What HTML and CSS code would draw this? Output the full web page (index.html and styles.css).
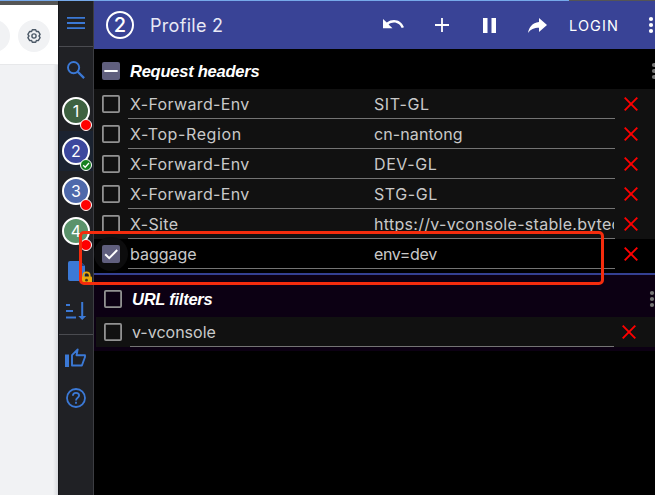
FILE: index.html
```html
<!DOCTYPE html>
<html lang="en">
<head>
<meta charset="utf-8">
<title>Profile 2</title>
<link rel="stylesheet" href="styles.css">
</head>
<body>
<svg class="defs" aria-hidden="true">
  <symbol id="box" viewBox="0 0 18 18"><rect x=".9" y=".9" width="16.2" height="16.2" rx="1" fill="none" stroke="currentColor" stroke-width="1.8"/></symbol>
  <symbol id="close" viewBox="0 0 14 14"><path d="M.7.7l12.6 12.6M13.3.7L.7 13.3" fill="none" stroke="currentColor" stroke-width="1.9"/></symbol>
  <symbol id="dots" viewBox="0 0 6 18"><circle cx="3" cy="3" r="2.1"/><circle cx="3" cy="9" r="2.1"/><circle cx="3" cy="15" r="2.1"/></symbol>
</svg>
<div class="progress"><div class="progress-fill"></div></div>
<div class="shell">
  <div class="page">
    <div class="page-top">
      <span class="round"></span>
      <span class="round">
        <svg width="14" height="14" viewBox="0 0 14 14" fill="none" stroke="#4c5967" stroke-width="1.4" stroke-linejoin="round"><path d="M5.3.8h3.4l.7 1.7 1.9-.1 1.8 2.9L12 7l1.1 1.7-1.8 2.9-1.9-.1-.7 1.7H5.3l-.7-1.7-1.9.1L.9 8.7 2 7 .9 5.3l1.8-2.9 1.9.1z"/><circle cx="7" cy="7" r="2.1"/></svg>
      </span>
    </div>
  </div>
  <nav class="side">
    <div class="cell menu"><svg width="18" height="12" viewBox="0 0 18 12" fill="#3b79d6"><path d="M0 0h18v1.8H0zM0 5.1h18v1.8H0zM0 10.2h18V12H0z"/></svg></div>
    <div class="cell search"><svg width="18" height="18" viewBox="0 0 18 18" fill="none" stroke="#3b79d6" stroke-width="1.9"><circle cx="6.6" cy="6.6" r="5.6"/><path d="M10.7 10.7l6.4 6.4" stroke-width="2.3"/></svg></div>
    <div class="cell"><span class="num green">1<i class="dot"></i></span></div>
    <div class="cell current"><span class="num indigo">2<i class="dot ok"><svg width="8" height="8" viewBox="0 0 8 8" fill="none" stroke="#fff" stroke-width="1.3"><path d="M1.2 4.2l2 2L7 2"/></svg></i></span></div>
    <div class="cell"><span class="num blue">3<i class="dot"></i></span></div>
    <div class="cell"><span class="num mint">4<i class="dot"></i></span></div>
    <div class="cell"><svg class="doc" width="25" height="25" viewBox="0 0 25 25"><path d="M2 1h10l5 5v15H2q-2 0-2-2V3q0-2 2-2z" fill="#3b79d6"/><path d="M12 1v5h5" fill="#24427c"/><path d="M15.3 17v-1.4a3.2 3.2 0 0 1 6.4 0V17" fill="none" stroke="#eaa80b" stroke-width="1.7"/><rect x="13" y="16.5" width="11" height="7.5" rx="1" fill="#eaa80b"/><circle cx="18.5" cy="20.2" r="1.4" fill="#423719"/></svg></div>
    <div class="cell sort"><svg width="21" height="19" viewBox="0 0 21 19" fill="#3b79d6"><path d="M0 2h4v2H0zM0 8h7v2H0zM0 14.500h10v2H0zM15.200 0h2v14h3L16.200 18l-3.900-4h2.900z"/></svg></div>
    <div class="cell like"><svg width="24" height="24" viewBox="0 0 24 24" fill="#3b79d6"><path d="M1 9.5h4V22H1z"/><path d="M8 10.1L13.7 4.4 12.5 10.2H21V12l-3.1 8.5H8z" fill="none" stroke="#3b79d6" stroke-width="1.9" stroke-linejoin="round"/></svg></div>
    <div class="cell help"><svg width="20" height="20" viewBox="0 0 20 20" fill="none" stroke="#3b79d6" stroke-width="1.8"><circle cx="10" cy="10" r="9"/><path d="M6.9 7.8c0-1.8 1.3-3 3.1-3s3.1 1.2 3.1 2.8c0 2.1-3.1 2.3-3.1 4.800M10 13.800v2"/></svg></div>
  </nav>
  <main class="main">
    <header class="bar">
      <span class="badge">2</span>
      <h1>Profile 2</h1>
      <div class="tools">
        <svg width="22" height="12" viewBox="0 0 22 12" fill="#fff"><path d="M0 0l3.8 3.5C6 1.8 8.5 1 11 1c4.500 0 8.300 2.800 10 7.300l-2.300.8C17.400 5.700 14.500 3.500 11 3.500c-2 0-3.900.7-5.400 1.900L9.500 9.300H0z"/></svg>
        <svg width="14" height="14" viewBox="0 0 14 14" fill="#fff"><path d="M6.100 0h1.800v6.100H14v1.800H7.900V14H6.100V7.900H0V6.100h6.100z"/></svg>
        <svg width="13" height="15" viewBox="0 0 13 15" fill="#fff"><path d="M0 0h4.500v15H0zM8.500 0H13v15H8.500z"/></svg>
        <svg width="19" height="15" viewBox="0 0 19 15" fill="#fff"><path d="M11 0l8 7-8 7v-4.200C6 9.800 2.700 11.300 0 15 1 9.500 4.200 4.600 11 4z"/></svg>
      </div>
      <span class="login">LOGIN</span>
      <svg class="more" width="6" height="18" fill="#fff"><use href="#dots"/></svg>
    </header>
    <section class="headers">
      <div class="title">
        <svg class="check" width="18" height="18" viewBox="0 0 18 18"><rect width="18" height="18" rx="2" fill="#605f7e"/><path d="M2.300 9h13.400" stroke="#fff" stroke-width="2"/></svg>
        <h2>Request headers</h2>
        <svg class="dots" width="6" height="18"><use href="#dots"/></svg>
      </div>
      <div class="row"><svg class="check"><use href="#box"/></svg><div class="fields"><span class="name wide">X-Forward-Env</span><span class="value upper">SIT-GL</span></div><svg class="x"><use href="#close"/></svg></div>
      <div class="row"><svg class="check"><use href="#box"/></svg><div class="fields"><span class="name wider">X-Top-Region</span><span class="value">cn-nantong</span></div><svg class="x"><use href="#close"/></svg></div>
      <div class="row"><svg class="check"><use href="#box"/></svg><div class="fields"><span class="name wide">X-Forward-Env</span><span class="value upper">DEV-GL</span></div><svg class="x"><use href="#close"/></svg></div>
      <div class="row"><svg class="check"><use href="#box"/></svg><div class="fields"><span class="name wide">X-Forward-Env</span><span class="value upper">STG-GL</span></div><svg class="x"><use href="#close"/></svg></div>
      <div class="row"><svg class="check"><use href="#box"/></svg><div class="fields"><span class="name wide">X-Site</span><span class="value url">https://v-vconsole-stable.byted</span></div><svg class="x"><use href="#close"/></svg></div>
      <div class="row active"><svg class="check" viewBox="0 0 18 18"><circle cx="9" cy="9" r="17" fill="#0c0c0d"/><rect width="18" height="18" rx="2" fill="#605f7e"/><path d="M3.200 9.200l4 4L15.200 5" fill="none" stroke="#fff" stroke-width="2"/></svg><div class="fields"><span class="name">baggage</span><span class="value tight">env=dev</span></div><svg class="x"><use href="#close"/></svg></div>
    </section>
    <section class="filters">
      <div class="title">
        <svg class="check"><use href="#box"/></svg>
        <h2>URL filters</h2>
        <svg class="dots" width="6" height="18"><use href="#dots"/></svg>
      </div>
      <div class="row"><svg class="check"><use href="#box"/></svg><div class="fields"><span class="name">v-vconsole</span></div><svg class="x"><use href="#close"/></svg></div>
    </section>
  </main>
</div>
<div class="marker"></div>
</body>
</html>
```
FILE: styles.css
```css
* { box-sizing: border-box; }
body {
  margin: 0;
  width: 655px;
  height: 495px;
  overflow: hidden;
  background: #000;
  color: #c9c9c9;
  font: 16px Inter, "Liberation Sans", sans-serif;
}
svg { display: block; flex: none; }
h1, h2 { margin: 0; }
.defs { display: none; }
.progress { height: 1px; background: #555; }
.progress-fill { width: 569px; height: 1px; background: #76a9ea; }
.shell { display: flex; height: 494px; }

.page { width: 58px; flex: none; background: linear-gradient(90deg, transparent 53px, #d9dbdf) #f1f2f4; border-top: 4px solid #555; }
.page-top { display: flex; align-items: center; gap: 8px; height: 60px; background: #fff; border-bottom: 1px solid #e7e8ea; overflow: hidden; }
.round { display: flex; align-items: center; justify-content: center; flex: none; width: 32px; height: 32px; margin-top: 2px; border-radius: 50%; background: #f1f2f4; }
.round:first-child { margin-left: -22px; }

.side { width: 36px; flex: none; background: #202125; border-left: 1px solid #15161a; border-right: 1px solid #3c3d42; }
.cell { display: flex; align-items: center; justify-content: center; height: 40px; }
.menu { height: 46px; padding-bottom: 2px; border-bottom: 1px solid #4a4b50; }
.search { height: 44px; padding-top: 2px; }
.current { background: #1b2331; }
.num {
  position: relative;
  display: flex;
  align-items: center;
  justify-content: center;
  flex: none;
  width: 28px;
  height: 28px;
  border: 2px solid #fff;
  border-radius: 50%;
  color: #fff;
  font-size: 16px;
}
.green { background: #3e6241; }
.indigo { background: #3c489e; }
.blue { background: #4e69ab; }
.mint { background: #5b936b; }
.dot { position: absolute; right: -4px; bottom: -8px; width: 12px; height: 12px; border: 1px solid #fff; border-radius: 50%; background: #f00; display: flex; align-items: center; justify-content: center; }
.ok { background: #168020; }
.doc { margin-left: 8px; margin-top: 3px; }
.sort { height: 44px; padding-bottom: 3px; border-bottom: 1px solid #4a4b50; }
.like { height: 44px; }
.help { height: 38px; }

.main { flex: 1; min-width: 0; overflow: hidden; }
.bar { display: flex; align-items: center; height: 48px; padding-left: 12px; background: #394396; color: #fff; overflow: hidden; }
.badge { display: flex; align-items: center; justify-content: center; flex: none; width: 28px; height: 28px; border: 2px solid #fff; border-radius: 50%; font-size: 20px; font-weight: 500; }
h1 { width: 233px; flex: none; padding-left: 16px; font-size: 18px; font-weight: 400; letter-spacing: .3px; color: #e8e9f5; }
.tools { display: flex; align-items: center; gap: 30px; width: 186px; flex: none; padding-left: 16px; }
.tools svg:nth-child(3) { margin-left: 4px; }
.tools svg:nth-child(4) { margin-left: 2px; }
.login { width: 80px; flex: none; padding-left: 16px; font-size: 14.500px; letter-spacing: 1.1px; }
.more { margin-left: 15px; }
.title { display: flex; align-items: center; height: 40px; padding-top: 4px; padding-left: 8px; }
h2 { margin-left: 10px; color: #fff; font: italic bold 16.500px "Liberation Sans", Arial, sans-serif; letter-spacing: -.24px; }
.title .dots { margin-left: auto; margin-right: -2px; fill: #777; }
.check { width: 18px; height: 18px; color: #929292; }
.row { display: flex; align-items: center; height: 30px; padding-left: 8px; background: #111; }
.fields { display: flex; width: 487px; height: 30px; margin: 0 9px 0 8px; padding: 0 1px 0 2px; border-bottom: 1px solid #747474; line-height: 30px; flex: none; white-space: nowrap; overflow: hidden; }
.name { width: 244px; flex: none; }
.wide { letter-spacing: .35px; }
.wider { letter-spacing: .6px; }
.value { flex: 1; min-width: 0; overflow: hidden; letter-spacing: .1px; }
.upper { letter-spacing: .6px; }
.url { letter-spacing: .3px; }
.tight { letter-spacing: -.35px; }
.x { width: 14px; height: 14px; color: #f00; }
.active { background: #000; }
.active .check { overflow: visible; }
.headers { height: 226px; border-bottom: 2px solid #344092; background: #000; }
.filters { height: 76px; padding: 2px 0 4px 2px; background: #0c0013; }
.filters .title .dots { margin-right: 0; }
.filters .fields { width: 484px; }
.filters .x { margin-left: -1px; }
.marker { position: absolute; left: 79px; top: 231px; width: 525px; height: 54px; border: 3px solid #f42c0d; border-radius: 5px; }
```
